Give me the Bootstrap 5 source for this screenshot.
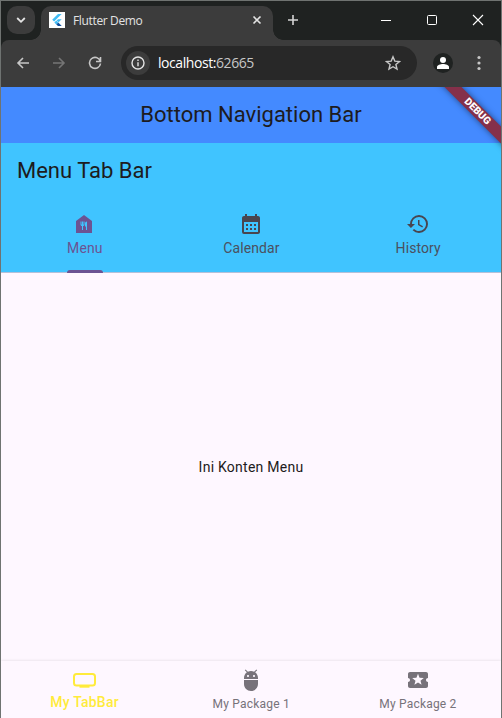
<!DOCTYPE html>
<html lang="en">
<head>
<meta charset="utf-8">
<meta name="viewport" content="width=device-width, initial-scale=1">
<title>Flutter Demo</title>
<link href="https://cdn.jsdelivr.net/npm/bootstrap@5.3.0/dist/css/bootstrap.min.css" rel="stylesheet">
<style>
body{height:718px;font-family:Roboto,sans-serif;color:#1d1b20;background:#fef7ff}
svg{display:block;flex:none}
.window{height:718px;border:1px solid #6f7371;border-bottom:0}
.chrome{font-family:"Open Sans","Noto Sans",sans-serif;color:#e3e3e3;background:#3c3c3c}
.strip{height:39px;background:#1f2221}
.tab-search{width:28px;height:28px;border-radius:10px;background:#3c3c3c;margin:5px 0 0 6px}
.browser-tab{width:232px;height:34px;margin:5px 0 0 6px;border-radius:10px 10px 0 0;background:#3c3c3c;padding:0 11px 6px 8px}
.browser-tab::before,.browser-tab::after{content:"";position:absolute;bottom:0;width:10px;height:10px}
.browser-tab::before{left:-10px;background:radial-gradient(circle at 0 0,transparent 9.5px,#3c3c3c 10px)}
.browser-tab::after{right:-10px;background:radial-gradient(circle at 100% 0,transparent 9.5px,#3c3c3c 10px)}
.tab-title{font-size:12px;letter-spacing:-.35px;margin-left:8px;padding-top:1px}
.new-tab{margin:13px 0 0 14px}
.controls{padding:13px 17px 0 0;gap:34px}
.toolbar{height:47px;padding-bottom:1px;background:#3c3c3c;border-radius:8px 8px 0 0}
.toolbar-back{background:#1f2221}
.nav-back{margin-left:15px}
.nav-next{margin-left:22px}
.profile{margin-left:16px}
.more{margin-left:24px}
.address{width:296px;height:34px;border-radius:17px;background:#282828;padding:0 16px 0 5px;margin-left:19px}
.info{width:24px;height:24px;background:#3c3c3c}
.url{font-size:14px;letter-spacing:-.43px;margin-left:8px;padding-bottom:1px;color:#fff}
.url span{color:#c7c7c7}
.headline{height:56px;font-size:22px;line-height:28px}
.top-bar{background:#448aff}
.menu-bar{background:#40c4ff;height:130px;border-bottom:1px solid #b4c0d9}
.tab-item{height:74px;padding-top:13px;font-size:14px;line-height:20px;letter-spacing:.1px;color:#49454f}
.tab-item span{margin-top:2px;padding-left:1px;color:#4b5060}
.tab-item.chosen,.tab-item.chosen span{color:#6c5393}
.indicator{left:50%;margin-left:-17.5px;bottom:0;width:36px;height:3px;border-radius:3px 3px 0 0;background:#6c5393}
.ribbon-box{right:0;top:0;width:80px;height:80px}
.ribbon{left:-15px;top:17px;width:140px;height:12px;padding-left:4px;transform:rotate(45deg);background:#85304a;box-shadow:0 0 6px rgba(0,0,0,.5);color:#fff;font-size:10.2px;line-height:12px;font-weight:900}
.main-text{font-size:14px;letter-spacing:.25px;line-height:20px;padding-bottom:1px}
.bottom-bar{height:57px;box-shadow:0 0 3px rgba(0,0,0,.13);background:#fef7ff;color:#77727a;font-size:12px;line-height:16px;letter-spacing:.2px}
.bottom-item{padding-top:7px}
.bottom-item span{margin-top:4px;padding-left:.5px}
.bottom-item.current{color:#ffeb3b;font-size:14px;font-weight:500}
.bottom-item.current span{margin-top:2px}
</style>
<script src="https://cdn.jsdelivr.net/npm/bootstrap@5.3.0/dist/js/bootstrap.bundle.min.js"></script>
</head>
<body class="overflow-hidden">
<div class="window d-flex flex-column overflow-hidden">
  <header class="chrome">
    <div class="strip d-flex">
      <div class="tab-search d-flex align-items-center justify-content-center">
        <svg width="10" height="8" fill="none" stroke="#e3e3e3" stroke-width="1.8"><path d="m1.2 2 3.8 3.8L8.800 2"/></svg>
      </div>
      <div class="browser-tab position-relative d-flex align-items-center">
        <svg width="16" height="16"><path fill="#fff" d="M0 0h16v16H0z"/><path fill="#42bdf5" d="M9 2h3.700L5.100 9.600 3.200 7.700zM9 7.200h3.700L9.600 10.300 7.700 8.400z"/><path fill="#42bdf5" d="m5.300 10.500 2-2 2 2-2 2z"/><path fill="#0d4f9e" d="m7.300 12.500 2-2L12.700 14H9z"/></svg>
        <span class="tab-title">Flutter Demo</span>
        <svg class="ms-auto" width="10" height="10" stroke="#e3e3e3" stroke-width="1.600"><path d="m1.500 1.500 7 7m0-7-7 7"/></svg>
      </div>
      <svg class="new-tab" width="12" height="12" stroke="#d5d5d5" stroke-width="1.600"><path d="M6 1v10M1 6h10"/></svg>
      <div class="controls ms-auto d-flex">
        <svg width="12" height="12" stroke="#fff"><path d="M1 6.500h10"/></svg>
        <svg width="12" height="12" fill="none" stroke="#fff"><rect x="1.500" y="1.500" width="9" height="9" rx="1"/></svg>
        <svg width="12" height="12" stroke="#fff" stroke-width="1.100"><path d="m1 1 10 10m0-10L1 11"/></svg>
      </div>
    </div>
    <div class="toolbar-back">
      <div class="toolbar d-flex align-items-center">
        <svg class="nav-back" width="14" height="14" fill="none" stroke="#c7c7c7" stroke-width="1.600"><path d="M13 7H2m5-5L2 7l5 5"/></svg>
        <svg class="nav-next" width="14" height="14" fill="none" stroke="#757575" stroke-width="1.600"><path d="M1 7h11M7 2l5 5-5 5"/></svg>
        <svg class="nav-next" width="14" height="14" fill="none" stroke="#c7c7c7" stroke-width="1.600"><path d="M12.200 5A5.500 5.500 0 1 0 12.500 7.500M12.500 1v4.500H8"/></svg>
        <div class="address d-flex align-items-center">
          <div class="info rounded-circle d-flex align-items-center justify-content-center"><svg width="14" height="14" fill="none" stroke="#e3e3e3" stroke-width="1.400"><circle cx="7" cy="7" r="6"/><path d="M7 6.300v4M7 3.500v1.500"/></svg></div>
          <span class="url">localhost:<span>62665</span></span>
          <svg class="ms-auto" width="16" height="16" fill="none" stroke="#c7c7c7" stroke-width="1.400"><path d="m8 1.800 1.800 4.300 4.700.4-3.600 3 1.100 4.600L8 11.700l-4 2.400 1.100-4.600-3.600-3 4.700-.4z"/></svg>
        </div>
        <svg class="profile" width="20" height="20"><circle cx="10" cy="10" r="10" fill="#1f2221"/><circle cx="10" cy="7" r="3" fill="#fff"/><path fill="#fff" d="M4 16v-2c0-2 3.500-3 6-3s6 1 6 3v2z"/></svg>
        <svg class="more" width="4" height="16" fill="#c7c7c7"><circle cx="2" cy="2.500" r="1.600"/><circle cx="2" cy="8" r="1.600"/><circle cx="2" cy="13.500" r="1.600"/></svg>
      </div>
    </div>
  </header>
  <div class="position-relative">
    <div class="top-bar headline d-flex align-items-center justify-content-center">Bottom Navigation Bar</div>
    <div class="menu-bar">
      <div class="headline d-flex align-items-center px-3">Menu Tab Bar</div>
      <div class="row g-0">
        <div class="col tab-item chosen position-relative d-flex flex-column align-items-center">
          <svg width="24" height="24" fill="currentColor"><path d="M12 3 4 9v12h16V9l-8-6zm.5 9.500c0 .83-.67 1.500-1.500 1.500v4h-1v-4c-.83 0-1.500-.67-1.500-1.500v-3h1v3h.5v-3h1v3h.5v-3h1v3zM15 18h-1v-3.500h-1v-3c0-1.100.9-2 2-2V18z"/></svg>
          <span>Menu</span><div class="indicator position-absolute"></div>
        </div>
        <div class="col tab-item d-flex flex-column align-items-center">
          <svg width="24" height="24" fill="currentColor"><path d="M19 4h-1V2h-2v2H8V2H6v2H5c-1.110 0-1.990.9-1.990 2L3 20a2 2 0 0 0 2 2h14c1.100 0 2-.9 2-2V6c0-1.100-.9-2-2-2zm0 16H5V10h14v10zM9 14H7v-2h2v2zm4 0h-2v-2h2v2zm4 0h-2v-2h2v2zm-8 4H7v-2h2v2zm4 0h-2v-2h2v2zm4 0h-2v-2h2v2z"/></svg>
          <span>Calendar</span>
        </div>
        <div class="col tab-item d-flex flex-column align-items-center">
          <svg width="24" height="24" fill="currentColor"><path d="M13 3a9 9 0 0 0-9 9H1l3.890 3.890.07.14L9 12H6c0-3.870 3.130-7 7-7s7 3.130 7 7-3.130 7-7 7c-1.930 0-3.680-.79-4.940-2.060l-1.420 1.420A8.954 8.954 0 0 0 13 21a9 9 0 0 0 0-18zm-1 5v5l4.280 2.540.72-1.210-3.500-2.080V8H12z"/></svg>
          <span>History</span>
        </div>
      </div>
    </div>
    <div class="ribbon-box position-absolute overflow-hidden"><div class="ribbon position-absolute text-center">DEBUG</div></div>
  </div>
  <main class="main-text flex-grow-1 d-flex align-items-center justify-content-center">Ini Konten Menu</main>
  <nav class="bottom-bar row g-0">
    <div class="col bottom-item current d-flex flex-column align-items-center">
      <svg width="24" height="24" fill="none" stroke="currentColor" stroke-width="2"><rect x="2" y="6" width="21" height="11.500" rx="2.500"/><path d="M7.500 18.700h10"/></svg>
      <span>My TabBar</span>
    </div>
    <div class="col bottom-item d-flex flex-column align-items-center">
      <svg width="24" height="24" fill="currentColor"><path d="M5 16c0 3.870 3.130 7 7 7s7-3.130 7-7v-4H5v4zM16.120 4.370l2.100-2.100-.82-.83-2.300 2.310C14.160 3.280 13.120 3 12 3s-2.160.28-3.090.75L6.600 1.440l-.82.83 2.100 2.100C6.140 5.640 5 7.680 5 10v1h14v-1c0-2.320-1.140-4.360-2.880-5.630zM9 9c-.55 0-1-.45-1-1s.45-1 1-1 1 .45 1 1-.45 1-1 1zm6 0c-.55 0-1-.45-1-1s.45-1 1-1 1 .45 1 1-.45 1-1 1z"/></svg>
      <span>My Package 1</span>
    </div>
    <div class="col bottom-item d-flex flex-column align-items-center">
      <svg width="24" height="24" fill="currentColor"><path d="M20 12c0-1.100.9-2 2-2V6c0-1.100-.9-2-2-2H4c-1.100 0-1.990.9-1.990 2v4c1.100 0 1.990.9 1.990 2s-.89 2-2 2v4c0 1.100.9 2 2 2h16c1.100 0 2-.9 2-2v-4c-1.100 0-2-.9-2-2zm-4.420 4.800L12 14.500l-3.580 2.300 1.080-4.120-3.290-2.690 4.240-.25L12 5.800l1.540 3.950 4.240.25-3.290 2.690 1.090 4.110z"/></svg>
      <span>My Package 2</span>
    </div>
  </nav>
</div>
</body>
</html>
